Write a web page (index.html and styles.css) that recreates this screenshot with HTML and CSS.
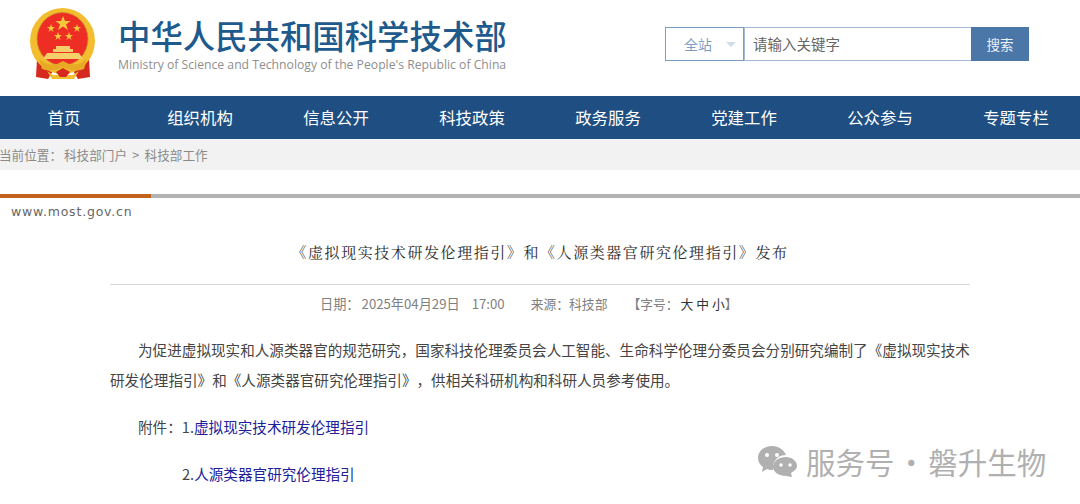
FILE: index.html
```html
<!DOCTYPE html>
<html lang="zh-CN">
<head>
    <meta charset="UTF-8">
    <title>《虚拟现实技术研发伦理指引》和《人源类器官研究伦理指引》发布</title>
    <link rel="stylesheet" href="styles.css">
</head>
<body>
    <header class="header">
        <svg class="emblem" viewBox="0 0 70 76" width="70" height="76">
            <path d="M10 54 L9 72 L21 74 L27 64 Z" fill="#d5281f"/>
            <path d="M62 54 L63 72 L51 74 L45 64 Z" fill="#d5281f"/>
            <ellipse cx="35.500" cy="36" rx="32.500" ry="33" fill="#f2bd2e"/>
            <ellipse cx="35.500" cy="34" rx="25.500" ry="26.500" fill="#ee2e24" stroke="#c9922a" stroke-width="0.800"/>
            <polygon points="36,11 38,16 43.500,16 39,19.500 41,25 36,21.500 31,25 33,19.500 28.500,16 34,16" fill="#f6c83c"/>
            <polygon points="24,19 25,22 28,22 25.500,24 26.500,27 24,25 21.500,27 22.500,24 20,22 23,22" fill="#f6c83c"/>
            <polygon points="50,19 51,22 54,22 51.500,24 52.500,27 50,25 47.500,27 48.500,24 46,22 49,22" fill="#f6c83c"/>
            <polygon points="31,27 32,30 35,30 32.500,32 33.500,35 31,33 28.500,35 29.500,32 27,30 30,30" fill="#f6c83c"/>
            <polygon points="42,27 43,30 46,30 43.500,32 44.500,35 42,33 39.500,35 40.500,32 38,30 41,30" fill="#f6c83c"/>
            <path d="M29 41 H43 V44 H46 V47 H26 V44 H29 Z" fill="#f5cf6a"/>
            <path d="M20 48 H52 L56 54 H16 Z" fill="#f5cf6a"/>
            <path d="M12 54 Q24 64 36 56 Q48 64 60 54 L57 64 Q46 68 36 62 Q26 68 15 64 Z" fill="#e8aa25"/>
            <path d="M20 66 L26 70 H46 L52 66 L47 74 H25 Z" fill="#f2bd2e"/>
            <path d="M29 67 L33 72 H39 L43 67 L36 63 Z" fill="#d5281f"/>
        </svg>
        <div class="brand">
            <div class="brand-cn">中华人民共和国科学技术部</div>
            <div class="brand-en">Ministry of Science and Technology of the People's Republic of China</div>
        </div>
        <div class="search">
            <div class="search-scope">全站<span class="caret"></span></div>
            <div class="search-input">请输入关键字</div>
            <div class="search-btn">搜索</div>
        </div>
    </header>

    <nav class="nav">
        <a>首页</a>
        <a>组织机构</a>
        <a>信息公开</a>
        <a>科技政策</a>
        <a>政务服务</a>
        <a>党建工作</a>
        <a>公众参与</a>
        <a>专题专栏</a>
    </nav>

    <div class="crumb">
        <span class="crumb-label">当前位置：</span>
        <span class="crumb-path">科技部门户 &gt; 科技部工作</span>
    </div>

    <div class="rule"><div class="rule-accent"></div></div>
    <div class="site-url">www.most.gov.cn</div>

    <main class="article">
        <h1 class="title">《虚拟现实技术研发伦理指引》和《人源类器官研究伦理指引》发布</h1>
        <div class="meta">
            <span>日期：<span class="meta-date">2025年04月29日</span></span>
            <span class="meta-time">17:00</span>
            <span class="meta-source">来源：科技部</span>
            <span class="meta-size">【字号：<b>大 中 小</b>】</span>
        </div>
        <p class="para">为促进虚拟现实和人源类器官的规范研究，国家科技伦理委员会人工智能、生命科学伦理分委员会分别研究编制了《虚拟现实技术研发伦理指引》和《人源类器官研究伦理指引》，供相关科研机构和科研人员参考使用。</p>
        <p class="para">附件：1.<a class="file">虚拟现实技术研发伦理指引</a></p>
        <p class="para para-file">2.<a class="file">人源类器官研究伦理指引</a></p>
    </main>

    <div class="watermark">
        <svg class="wx" viewBox="0 0 40 32" width="40" height="32">
            <path d="M15 1 C7 1 1 6 1 13 C1 17 3 20 6 22 L5 27 L10 24 C12 25 14 25 16 25 C15 15 22 10 29 10 C27 5 22 1 15 1 Z" fill="#b0b0b0"/>
            <path d="M29 12 C22 12 16 16 16 22 C16 27 22 31 29 31 L35 32 L34 28 C37 26 40 24 40 21 C40 16 35 12 29 12 Z" fill="#b0b0b0"/>
            <circle cx="10" cy="10" r="2" fill="#fff"/>
            <circle cx="20" cy="10" r="2" fill="#fff"/>
            <circle cx="24" cy="20" r="1.700" fill="#fff"/>
            <circle cx="33" cy="20" r="1.700" fill="#fff"/>
        </svg>
        <span>服务号 · 磐升生物</span>
    </div>
</body>
</html>
```

FILE: styles.css
```css
* {
    box-sizing: border-box;
}
body {
    margin: 0;
    height: 504px;
    overflow: hidden;
    position: relative;
    background: #fff;
    font-family: "Noto Sans CJK SC", "Noto Sans", sans-serif;
    color: #444;
    text-spacing-trim: space-all;
}
.header {
    height: 96px;
    display: flex;
    align-items: flex-start;
    padding: 5px 51px 0 27px;
}
.emblem {
    flex: none;
    margin-right: 21px;
    filter: blur(0.4px);
}
.brand {
    padding-top: 10px;
    width: 389px;
}
.brand-cn {
    font-size: 32.4px;
    line-height: 40px;
    font-weight: 500;
    color: #1f5a8c;
    white-space: nowrap;
}
.brand-en {
    margin-top: 2px;
    font-family: "Open Sans", sans-serif;
    font-size: 12.2px;
    line-height: 16px;
    color: #8f8f8f;
    white-space: nowrap;
}
.search {
    margin: 22px 0 0 auto;
    display: flex;
    height: 34px;
    font-size: 14px;
}
.search-scope {
    width: 79px;
    border: 1px solid #7c9cc0;
    color: #7f9cc4;
    padding-left: 18px;
    display: flex;
    align-items: center;
}
.caret {
    margin-left: 14px;
    border-style: solid;
    border-width: 5px 5.5px 0;
    border-color: #d0dcec transparent transparent;
}
.search-input {
    width: 227px;
    border: 1px solid #a3bbd8;
    border-right: 0;
    color: #666;
    padding-left: 8px;
    font-size: 14.500px;
    line-height: 31px;
}
.search-btn {
    width: 58px;
    background: #4a76a8;
    color: #eef3f8;
    text-align: center;
    line-height: 34px;
    font-size: 13.500px;
}
.nav {
    height: 43px;
    background: #1f4f82;
    display: grid;
    grid-template-columns: repeat(8, 136px);
    margin-right: -8px;
    margin-left: -4px;
    color: #fff;
    font-size: 16.400px;
    text-align: center;
    line-height: 43px;
}
.crumb {
    height: 31px;
    background: #f2f2f2;
    color: #8a8a8a;
    font-size: 12.600px;
    line-height: 31px;
    white-space: nowrap;
    margin-left: -1px;
    display: flex;
    gap: 2px;
}
.crumb-label {
    width: 63px;
}
.crumb-path {
    word-spacing: 2.500px;
}
.rule {
    margin-top: 24px;
    height: 4px;
    background: #b2b2b2;
}
.rule-accent {
    width: 151px;
    height: 4px;
    background: #c2621c;
}
.site-url {
    padding: 5px 0 0 11px;
    font-family: "DejaVu Sans", sans-serif;
    font-size: 12.500px;
    line-height: 18px;
    color: #666;
    letter-spacing: 0.800px;
}
.article {
    width: 860px;
    margin: 0 auto;
    position: relative;
}
.title {
    margin: 0;
    padding-top: 19px;
    height: 64px;
    border-bottom: 1px solid #d8d8d8;
    text-align: center;
    font-family: "Noto Serif CJK SC", "Noto Sans CJK SC", serif;
    font-size: 15px;
    font-weight: 400;
    letter-spacing: 1.570px;
    line-height: 24px;
    color: #2c2c2c;
}
.meta {
    display: flex;
    height: 38px;
    padding-left: 210px;
    font-size: 13.200px;
    line-height: 38px;
    color: #808080;
}
.meta-date {
    margin-left: 2px;
}
.meta-time {
    margin-left: 12px;
}
.meta-source {
    margin-left: 26px;
    font-size: 12.800px;
}
.meta-size {
    margin-left: 20px;
    font-size: 12.800px;
}
.meta b {
    font-weight: 400;
    color: #333;
    margin-left: 2px;
}
.para {
    margin: 12px 0 17px;
    font-size: 14.600px;
    line-height: 30px;
    text-indent: 28px;
    color: #444;
}
.para-file {
    text-indent: 72px;
}
.file {
    color: #20209a;
}
.watermark {
    position: absolute;
    left: 757px;
    top: 444px;
    display: flex;
    align-items: center;
    gap: 9px;
    font-size: 29.500px;
    line-height: 34px;
    color: #b0b0b0;
    white-space: nowrap;
    word-spacing: -4.500px;
}
```
